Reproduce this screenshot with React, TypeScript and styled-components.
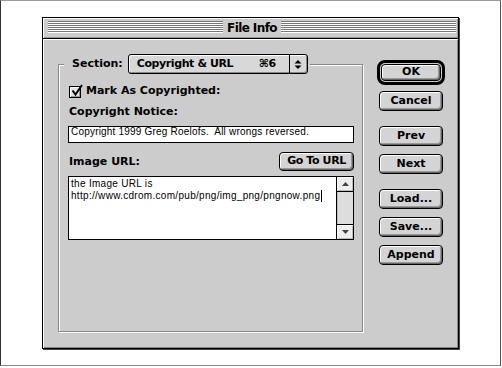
import React from 'react';
import styled, { createGlobalStyle } from 'styled-components';

const GlobalStyle = createGlobalStyle`
  html, body { margin: 0; padding: 0; background: #fff; }
  body { width: 502px; height: 368px; overflow: hidden; }
`;

const chicago = `"DejaVu Sans", "Liberation Sans", sans-serif`;
const geneva = `"Liberation Sans", Arial, sans-serif`;

const Frame = styled.div`
  box-sizing: border-box;
  width: 501px;
  height: 366px;
  border-style: solid;
  border-width: 1px;
  border-color: #9a9a9a #555 #888 #333;
  background: #fff;
  padding: 16px 0 0 41px;
`;

const Window = styled.div`
  box-sizing: border-box;
  width: 417px;
  height: 332px;
  border: 1px solid #000;
  box-shadow: 1px 1px 0 #444;
  background: #ccc;
  display: flex;
  flex-direction: column;
`;

const TitleBar = styled.div`
  box-sizing: border-box;
  height: 21px;
  flex: none;
  border-bottom: 1px solid #000;
  box-shadow: inset 1px 1px 0 #fff, inset -1px -1px 0 #999;
  display: flex;
  align-items: flex-start;
  gap: 3px;
  padding: 3px 2px 0 5px;
`;

const Stripes = styled.div`
  flex: 1;
  height: 12px;
  background: repeating-linear-gradient(to bottom, #777 0 1px, #fff 1px 2px);
`;

const Title = styled.div`
  font-family: ${chicago};
  font-weight: bold;
  font-size: 12px;
  line-height: 14px;
  letter-spacing: -0.6px;
  color: #000;
  padding: 0 1px;
`;

const Content = styled.div`
  flex: 1;
  display: flex;
  align-items: flex-start;
  gap: 14px;
  padding: 15px 0 0 15px;
  box-shadow: inset 1px 1px 0 #fff, inset -1px -1px 0 #888;
`;

const Group = styled.fieldset`
  box-sizing: border-box;
  margin: 0;
  width: 305px;
  height: 278px;
  min-width: 0;
  padding: 10px 8px 0 9px;
  border: 1px solid #888;
  box-shadow: 1px 1px 0 #fff, inset 1px 1px 0 #fff;
  display: flex;
  flex-direction: column;
`;

const Legend = styled.legend`
  margin-left: -4px;
  padding: 0 2px 0 8px;
  background: #ccc;
`;

const LegendRow = styled.div`
  display: flex;
  align-items: center;
  gap: 5px;
  height: 20px;
`;

const Label = styled.span`
  font-family: ${chicago};
  font-weight: bold;
  font-size: 11px;
  line-height: 14px;
  color: #000;
  white-space: nowrap;
`;

const Popup = styled.div`
  box-sizing: border-box;
  width: 180px;
  height: 20px;
  border: 1px solid #000;
  border-radius: 3px;
  background: #d8d8d8;
  box-shadow: inset 1px 1px 0 #fff, inset -1px -1px 0 #888;
  display: flex;
  align-items: center;
`;

const PopupText = styled.div`
  flex: 1;
  display: flex;
  align-items: center;
  justify-content: space-between;
  padding: 0 13px 0 8px;
  font-family: ${chicago};
  font-weight: bold;
  font-size: 11px;
  letter-spacing: -0.4px;
  line-height: 14px;
`;

const PopupArrows = styled.div`
  box-sizing: border-box;
  width: 18px;
  height: 18px;
  border-left: 1px solid #000;
  display: flex;
  align-items: center;
  justify-content: center;
`;

const CheckRow = styled.div`
  display: flex;
  align-items: flex-start;
  gap: 5px;
  height: 14px;
  padding-left: 1px;
`;

const CheckBoxFrame = styled.span`
  position: relative;
  box-sizing: border-box;
  display: block;
  width: 12px;
  height: 12px;
  margin-top: 2px;
  border: 1px solid #000;
  background: #e4e4e4;
  box-shadow: inset 1px 1px 0 #fff, inset -1px -1px 0 #999;
`;

const CheckMark = styled.svg`
  position: absolute;
  left: 1px;
  top: -3px;
`;

const FieldLabel = styled(Label)<{ $gap: number }>`
  display: block;
  margin-top: ${(p) => p.$gap}px;
  padding-left: 1px;
`;

const TextField = styled.div`
  box-sizing: border-box;
  margin-top: 7px;
  height: 17px;
  border: 1px solid #000;
  background: #fff;
  padding: 0 2px;
  font-family: ${geneva};
  font-size: 10px;
  line-height: 10px;
  letter-spacing: 0.2px;
  white-space: pre;
  color: #000;
`;

const UrlRow = styled.div`
  margin-top: 9px;
  display: flex;
  align-items: center;
  justify-content: space-between;
  padding-left: 1px;
`;

const TextArea = styled.div`
  box-sizing: border-box;
  margin-top: 5px;
  height: 64px;
  border: 1px solid #000;
  background: #fff;
  display: flex;
`;

const TextBody = styled.div`
  flex: 1;
  padding: 1px 2px;
  font-family: ${geneva};
  font-size: 10px;
  line-height: 12px;
  letter-spacing: 0.3px;
  white-space: pre;
  color: #000;
`;

const Caret = styled.span`
  display: inline-block;
  width: 1px;
  height: 12px;
  background: #000;
  vertical-align: top;
  margin-left: 1px;
`;

const ScrollBar = styled.div`
  box-sizing: border-box;
  width: 17px;
  border-left: 1px solid #000;
  display: flex;
  flex-direction: column;
  background: #ddd;
`;

const ScrollArrow = styled.div<{ $down?: boolean }>`
  box-sizing: border-box;
  height: 15px;
  background: #eee;
  ${(p) => (p.$down ? 'border-top: 1px solid #000;' : 'border-bottom: 1px solid #000;')}
  box-shadow: inset 1px 1px 0 #fff, inset -1px -1px 0 #bbb;
  display: flex;
  align-items: center;
  justify-content: center;
`;

const Track = styled.div`
  flex: 1;
  background: #ddd;
  box-shadow: inset 1px 0 0 #bbb;
`;

const Column = styled.div`
  width: 68px;
  margin-top: 6px;
  display: flex;
  flex-direction: column;
  align-items: center;
`;

const DefaultRing = styled.div`
  box-sizing: border-box;
  width: 68px;
  height: 25px;
  border: 3px solid #000;
  border-radius: 8px;
  padding: 1px;
  display: flex;
`;

const Button = styled.div<{ $gap?: number; $w?: number }>`
  box-sizing: border-box;
  width: ${(p) => p.$w ?? 64}px;
  height: ${(p) => (p.$w ? 'auto' : '20px')};
  flex: ${(p) => (p.$w ? 1 : 'none')};
  margin-top: ${(p) => p.$gap ?? 0}px;
  border: 1px solid #000;
  border-radius: 4px;
  background: #d4d4d4;
  box-shadow: inset 1px 1px 0 #fff, inset -1px -1px 0 #666, inset -2px -2px 0 #999;
  display: flex;
  align-items: center;
  justify-content: center;
  font-family: ${chicago};
  font-weight: bold;
  font-size: 11px;
  line-height: 14px;
  color: #000;
  white-space: nowrap;
  padding-bottom: 1px;
`;

const UrlButton = styled(Button)`
  width: 75px;
  height: 19px;
  letter-spacing: -0.4px;
`;

const CheckBox = () => (
  <CheckBoxFrame>
    <CheckMark width="12" height="13" viewBox="0 0 12 13">
      <path d="M1.5 6.5 L4.5 10.5 L11 1" fill="none" stroke="#000" strokeWidth="2" />
    </CheckMark>
  </CheckBoxFrame>
);

const UpDown = () => (
  <svg width="8" height="11" viewBox="0 0 8 11">
    <path d="M0.5 4.5 L4 1 L7.5 4.5 Z" fill="#000" />
    <path d="M0.5 6.5 L7.5 6.5 L4 10 Z" fill="#000" />
  </svg>
);

const Tri = ({ down }: { down?: boolean }) => (
  <svg width="7" height="4" viewBox="0 0 7 4">
    {down ? <path d="M0 0 H7 L3.5 4 Z" fill="#444" /> : <path d="M0 4 H7 L3.5 0 Z" fill="#444" />}
  </svg>
);

export default function App() {
  return (
    <>
      <GlobalStyle />
      <Frame>
        <Window>
          <TitleBar>
            <Stripes />
            <Title>File Info</Title>
            <Stripes />
          </TitleBar>
          <Content>
            <Group>
              <Legend>
                <LegendRow>
                  <Label>Section:</Label>
                  <Popup>
                    <PopupText>
                      <span>Copyright &amp; URL</span>
                      <span>⌘6</span>
                    </PopupText>
                    <PopupArrows>
                      <UpDown />
                    </PopupArrows>
                  </Popup>
                </LegendRow>
              </Legend>
              <CheckRow>
                <CheckBox />
                <Label>Mark As Copyrighted:</Label>
              </CheckRow>
              <FieldLabel $gap={7}>Copyright Notice:</FieldLabel>
              <TextField>Copyright 1999 Greg Roelofs.  All wrongs reversed.</TextField>
              <UrlRow>
                <Label>Image URL:</Label>
                <UrlButton>Go To URL</UrlButton>
              </UrlRow>
              <TextArea>
                <TextBody>
                  the Image URL is{'\n'}http://www.cdrom.com/pub/png/img_png/pngnow.png
                  <Caret />
                </TextBody>
                <ScrollBar>
                  <ScrollArrow>
                    <Tri />
                  </ScrollArrow>
                  <Track />
                  <ScrollArrow $down>
                    <Tri down />
                  </ScrollArrow>
                </ScrollBar>
              </TextArea>
            </Group>
            <Column>
              <DefaultRing>
                <Button $w={1}>OK</Button>
              </DefaultRing>
              <Button $gap={6}>Cancel</Button>
              <Button $gap={15}>Prev</Button>
              <Button $gap={8}>Next</Button>
              <Button $gap={15}>Load...</Button>
              <Button $gap={8}>Save...</Button>
              <Button $gap={8}>Append</Button>
            </Column>
          </Content>
        </Window>
      </Frame>
    </>
  );
}
